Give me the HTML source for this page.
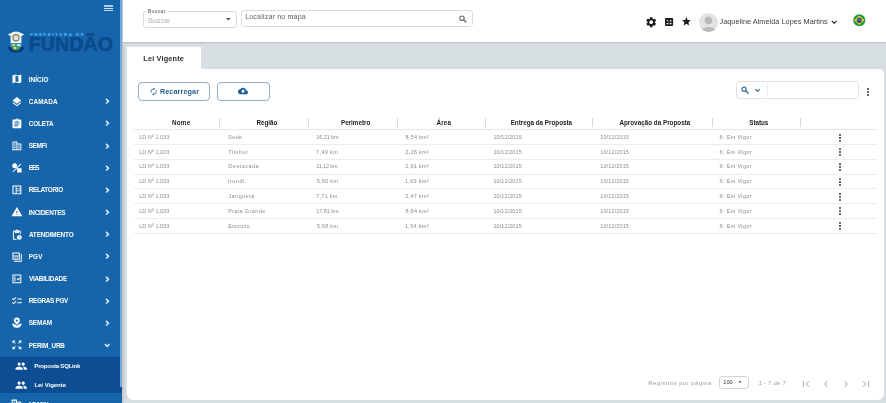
<!DOCTYPE html>
<html><head><meta charset="utf-8"><style>
html,body{margin:0;padding:0}
body{width:886px;height:403px;position:relative;overflow:hidden;background:#d7dee1;font-family:"Liberation Sans",sans-serif}
.t{position:absolute;line-height:1;white-space:nowrap}
.r{position:absolute}
.ic{position:absolute;overflow:visible}
#w{position:absolute;left:0;top:0;width:886px;height:403px;will-change:transform}
</style></head><body><div id="w">
<div class="r" style="left:0.00px;top:0.00px;width:122.30px;height:403.00px;background:#1665aa;box-shadow:1px 0 3px rgba(0,0,0,.18);"></div>
<div class="r" style="left:0.00px;top:356.90px;width:122.30px;height:36.30px;background:#0d4e93;"></div>
<div class="r" style="left:120.00px;top:0.00px;width:2.00px;height:387.30px;background:#74a8dc;"></div>
<div class="r" style="left:104.40px;top:5.00px;width:8.80px;height:2.00px;background:#b4cde6;"></div>
<div class="r" style="left:104.40px;top:8.00px;width:8.80px;height:1.00px;background:#d3e3f1;"></div>
<div class="r" style="left:104.40px;top:10.00px;width:8.80px;height:1.00px;background:#c9dcee;"></div>
<svg class="ic" style="left:4px;top:28px" width="24" height="28" viewBox="0 0 24 28"><path d="M3.8 6.4 L6.6 7.9 L6.6 15.2 L17.4 15.2 L17.4 7.9 L20.3 6.4 L17.6 5.3 Q12 1.6 6.4 5.3Z" fill="#f4f4ee"/><circle cx="12" cy="9.8" r="3.7" fill="#807a5a"/><circle cx="12" cy="9.8" r="2.5" fill="#e4e1d8"/><path d="M6.6 15.2 H17.4 V18.8 H6.6Z" fill="#2f97d8"/><path d="M7.8 16 H11 V18 H7.8Z" fill="#a8d26c"/><path d="M13 16.3 H16.6 V18.3 H13Z" fill="#d9e9f3"/><path d="M3.8 19.2 Q5 24.4 12 24.8 Q19 24.4 20.6 19.2 L17.6 18.5 Q16.2 22.2 12 22.5 Q7.8 22.2 6.4 18.5Z" fill="#0b3a73"/><path d="M7.8 18.6 Q12 17.2 16.4 18.6 Q15.2 22 12 22.3 Q8.8 22 7.8 18.6Z" fill="#4fa64c"/><circle cx="10.7" cy="20.1" r="1.4" fill="#e5d45a"/></svg>
<div class="t" style="left:29.96px;top:32.34px;font-size:42.00px;color:#42adee;font-weight:700;letter-spacing:16.600px;transform:scale(.1);transform-origin:0 0;-webkit-text-stroke:2.5px #42adee;">PREFEITURA DE</div>
<div class="t" style="left:28.70px;top:35.00px;font-size:19.60px;color:#0c4a8c;font-weight:700;letter-spacing:0.106px;-webkit-text-stroke:0.7px #0c4a8c;">FUNDÃO</div>
<div class="t" style="left:28.68px;top:77.00px;font-size:6.40px;color:#ffffff;font-weight:700;letter-spacing:0.072px;">INÍCIO</div>
<svg class="ic" style="left:10.60px;top:73.40px;" width="11.80" height="11.80" viewBox="0 0 24 24"><path d="M20.5 3l-.16.03L15 5.1 9 3 3.36 4.9c-.21.07-.36.25-.36.48V20.5c0 .28.22.5.5.5l.16-.03L9 18.9l6 2.1 5.64-1.9c.21-.07.36-.25.36-.48V3.5c0-.28-.22-.5-.5-.5zM15 19l-6-2.11V5l6 2.11V19z" fill="#ffffff"/></svg>
<div class="t" style="left:28.84px;top:99.00px;font-size:6.40px;color:#ffffff;font-weight:700;letter-spacing:0.070px;">CAMADA</div>
<svg class="ic" style="left:10.60px;top:95.57px;" width="11.80" height="11.80" viewBox="0 0 24 24"><path d="M11.99 18.54l-7.37-5.73L3 14.07l9 7 9-7-1.63-1.27-7.38 5.74zM12 16l7.36-5.73L21 9l-9-7-9 7 1.63 1.27L12 16z" fill="#ffffff"/></svg>
<svg class="ic" style="left:104.6px;top:98.27px" width="5" height="6.4" viewBox="0 0 5 6.4"><path d="M1 0.9 L3.5 3.2 L1 5.5" fill="none" stroke="#e6eef7" stroke-width="1.45"/></svg>
<div class="t" style="left:28.84px;top:121.00px;font-size:6.40px;color:#ffffff;font-weight:700;letter-spacing:-0.212px;">COLETA</div>
<svg class="ic" style="left:10.60px;top:117.74px;" width="11.80" height="11.80" viewBox="0 0 24 24"><path d="M19 3h-4.18C14.4 1.84 13.3 1 12 1c-1.3 0-2.4.84-2.82 2H5c-1.1 0-2 .9-2 2v14c0 1.1.9 2 2 2h14c1.1 0 2-.9 2-2V5c0-1.1-.9-2-2-2zm-7 0c.55 0 1 .45 1 1s-.45 1-1 1-1-.45-1-1 .45-1 1-1zm2 14H7v-2h7v2zm3-4H7v-2h10v2zm0-4H7V7h10v2z" fill="#ffffff"/></svg>
<svg class="ic" style="left:104.6px;top:120.44px" width="5" height="6.4" viewBox="0 0 5 6.4"><path d="M1 0.9 L3.5 3.2 L1 5.5" fill="none" stroke="#e6eef7" stroke-width="1.45"/></svg>
<div class="t" style="left:28.66px;top:143.00px;font-size:6.40px;color:#ffffff;font-weight:700;letter-spacing:-0.314px;">SEMFI</div>
<svg class="ic" style="left:10.60px;top:139.91px;" width="11.80" height="11.80" viewBox="0 0 24 24"><path d="M3 3h10v4h8v14H3zM5 5v14h6V5zm8 4v10h6V9zM6.5 7h3v2h-3zm0 4h3v2h-3zm0 4h3v2h-3zM14.5 11h3v2h-3zm0 4h3v2h-3z" fill="#ffffff"/></svg>
<svg class="ic" style="left:104.6px;top:142.61px" width="5" height="6.4" viewBox="0 0 5 6.4"><path d="M1 0.9 L3.5 3.2 L1 5.5" fill="none" stroke="#e6eef7" stroke-width="1.45"/></svg>
<div class="t" style="left:28.76px;top:165.00px;font-size:6.40px;color:#ffffff;font-weight:700;letter-spacing:-0.960px;">EES</div>
<svg class="ic" style="left:10.60px;top:162.08px;" width="11.80" height="11.80" viewBox="0 0 24 24"><path d="M7.5 2.5a5 5 0 1 0 0.01 0zM12.5 12.5h9v9h-9zM4.4 21L3 19.6 19.6 3 21 4.4z" fill="#ffffff"/></svg>
<svg class="ic" style="left:104.6px;top:164.78px" width="5" height="6.4" viewBox="0 0 5 6.4"><path d="M1 0.9 L3.5 3.2 L1 5.5" fill="none" stroke="#e6eef7" stroke-width="1.45"/></svg>
<div class="t" style="left:28.76px;top:187.00px;font-size:6.40px;color:#ffffff;font-weight:700;letter-spacing:-0.328px;">RELATORIO</div>
<svg class="ic" style="left:10.60px;top:184.25px;" width="11.80" height="11.80" viewBox="0 0 24 24"><path d="M3 3h18v18H3zM5.2 5.2v13.6h4.3V5.2zm6.1 0v4h7.5v-4zm0 5.4v2.8h7.5v-2.8zm0 4.2v4h7.5v-4z" fill="#ffffff"/></svg>
<svg class="ic" style="left:104.6px;top:186.95px" width="5" height="6.4" viewBox="0 0 5 6.4"><path d="M1 0.9 L3.5 3.2 L1 5.5" fill="none" stroke="#e6eef7" stroke-width="1.45"/></svg>
<div class="t" style="left:28.68px;top:210.00px;font-size:6.40px;color:#ffffff;font-weight:700;letter-spacing:-0.195px;">INCIDENTES</div>
<svg class="ic" style="left:10.60px;top:206.42px;" width="11.80" height="11.80" viewBox="0 0 24 24"><path d="M1 21h22L12 2 1 21zm12-3h-2v-2h2v2zm0-4h-2v-4h2v4z" fill="#ffffff"/></svg>
<svg class="ic" style="left:104.6px;top:209.12px" width="5" height="6.4" viewBox="0 0 5 6.4"><path d="M1 0.9 L3.5 3.2 L1 5.5" fill="none" stroke="#e6eef7" stroke-width="1.45"/></svg>
<div class="t" style="left:28.88px;top:232.00px;font-size:6.40px;color:#ffffff;font-weight:700;letter-spacing:-0.144px;">ATENDIMENTO</div>
<svg class="ic" style="left:10.60px;top:228.59px;" width="11.80" height="11.80" viewBox="0 0 24 24"><path d="M17 12c-2.76 0-5 2.24-5 5s2.24 5 5 5 5-2.24 5-5-2.24-5-5-5zm1.65 7.35L16.5 17.2V14h1v2.79l1.85 1.85-.7.71zM18 3h-3.18C14.4 1.84 13.3 1 12 1s-2.4.84-2.82 2H6c-1.1 0-2 .9-2 2v15c0 1.1.9 2 2 2h6.11c-.59-.57-1.07-1.25-1.42-2H6V5h2v3h8V5h2v5.08c.71.1 1.38.31 2 .6V5c0-1.1-.9-2-2-2zm-6 2c-.55 0-1-.45-1-1s.45-1 1-1 1 .45 1 1-.45 1-1 1z" fill="#ffffff"/></svg>
<svg class="ic" style="left:104.6px;top:231.29px" width="5" height="6.4" viewBox="0 0 5 6.4"><path d="M1 0.9 L3.5 3.2 L1 5.5" fill="none" stroke="#e6eef7" stroke-width="1.45"/></svg>
<div class="t" style="left:28.76px;top:254.00px;font-size:6.40px;color:#ffffff;font-weight:700;letter-spacing:0.071px;">PGV</div>
<svg class="ic" style="left:10.60px;top:250.76px;" width="11.80" height="11.80" viewBox="0 0 24 24"><path d="M3 3h15v15H3zM5 5v4h11V5zM5 11v5h11v-5zM7 12.5h2.5v2H7zm4.5 0H14v2h-2.5zM20 6h2v16H6v-2h14z" fill="#ffffff"/></svg>
<svg class="ic" style="left:104.6px;top:253.46px" width="5" height="6.4" viewBox="0 0 5 6.4"><path d="M1 0.9 L3.5 3.2 L1 5.5" fill="none" stroke="#e6eef7" stroke-width="1.45"/></svg>
<div class="t" style="left:28.91px;top:276.00px;font-size:6.40px;color:#ffffff;font-weight:700;letter-spacing:-0.255px;">VIABILIDADE</div>
<svg class="ic" style="left:10.60px;top:272.93px;" width="11.80" height="11.80" viewBox="0 0 24 24"><path d="M3 3h18v18H3zm2 2v14h14V5zm2 2h2v10H7zm4.5 5.2l1.4-1.4 1.6 1.6 3.1-3.1 1.4 1.4-4.5 4.5z" fill="#ffffff"/></svg>
<svg class="ic" style="left:104.6px;top:275.63px" width="5" height="6.4" viewBox="0 0 5 6.4"><path d="M1 0.9 L3.5 3.2 L1 5.5" fill="none" stroke="#e6eef7" stroke-width="1.45"/></svg>
<div class="t" style="left:28.76px;top:298.00px;font-size:6.40px;color:#ffffff;font-weight:700;letter-spacing:-0.341px;">REGRAS PGV</div>
<svg class="ic" style="left:10.60px;top:295.10px;" width="11.80" height="11.80" viewBox="0 0 24 24"><path d="M22 7h-9v2h9V7zm0 8h-9v2h9v-2zM5.54 11L2 7.46l1.41-1.41 2.12 2.12 4.24-4.24 1.41 1.41L5.54 11zm0 8L2 15.46l1.41-1.41 2.12 2.12 4.24-4.24 1.41 1.41L5.54 19z" fill="#ffffff"/></svg>
<svg class="ic" style="left:104.6px;top:297.80px" width="5" height="6.4" viewBox="0 0 5 6.4"><path d="M1 0.9 L3.5 3.2 L1 5.5" fill="none" stroke="#e6eef7" stroke-width="1.45"/></svg>
<div class="t" style="left:28.66px;top:320.00px;font-size:6.40px;color:#ffffff;font-weight:700;letter-spacing:-0.117px;">SEMAM</div>
<svg class="ic" style="left:10.60px;top:317.27px;" width="11.80" height="11.80" viewBox="0 0 24 24"><path d="M12 1.2a6 6 0 0 1 6 6c0 3.2-3 6.2-6 8.6-3-2.4-6-5.4-6-8.6a6 6 0 0 1 6-6zm0 4a2 2 0 1 0 .01 0zM2.5 13c2.8 0 5.5 1.6 9.5 5 4-3.4 6.7-5 9.5-5 0 5-4.3 9-9.5 9s-9.5-4-9.5-9z" fill="#ffffff"/></svg>
<svg class="ic" style="left:104.6px;top:319.97px" width="5" height="6.4" viewBox="0 0 5 6.4"><path d="M1 0.9 L3.5 3.2 L1 5.5" fill="none" stroke="#e6eef7" stroke-width="1.45"/></svg>
<div class="t" style="left:28.76px;top:343.00px;font-size:6.40px;color:#ffffff;font-weight:700;letter-spacing:-0.177px;">PERIM_URB</div>
<svg class="ic" style="left:10.60px;top:339.44px;" width="11.80" height="11.80" viewBox="0 0 24 24"><path d="M15 3l2.3 2.3-2.89 2.87 1.42 1.42L18.7 6.7 21 9V3zM3 9l2.3-2.3 2.87 2.89 1.42-1.42L6.7 5.3 9 3H3zm6 12l-2.3-2.3 2.89-2.87-1.42-1.42L5.3 17.3 3 15v6zm12-6l-2.3 2.3-2.87-2.89-1.42 1.42 2.89 2.87L15 21h6z" fill="#ffffff"/></svg>
<svg class="ic" style="left:103.8px;top:342.74px" width="6.4" height="5" viewBox="0 0 6.4 5"><path d="M0.9 1 L3.2 3.5 L5.5 1" fill="none" stroke="#e6eef7" stroke-width="1.45"/></svg>
<div class="t" style="left:27.68px;top:402.00px;font-size:6.40px;color:#ffffff;font-weight:700;letter-spacing:0.000px;">ADMIN</div>
<svg class="ic" style="left:10.10px;top:398.10px;" width="12.80" height="12.80" viewBox="0 0 24 24"><path d="M3 3h10v4h8v14H3zM5 5v14h6V5zm8 4v10h6V9zM6.5 7h3v2h-3zm0 4h3v2h-3zm0 4h3v2h-3zM14.5 11h3v2h-3zm0 4h3v2h-3z" fill="#ffffff"/></svg>
<div class="t" style="left:34.37px;top:363.00px;font-size:6.00px;color:#ffffff;font-weight:700;letter-spacing:-0.188px;">Proposta SQLink</div>
<div class="t" style="left:34.41px;top:382.00px;font-size:6.00px;color:#ffffff;font-weight:700;letter-spacing:-0.023px;">Lei Vigente</div>
<svg class="ic" style="left:15.20px;top:360.10px;" width="12.40" height="12.40" viewBox="0 0 24 24"><path d="M16 11c1.66 0 2.99-1.34 2.99-3S17.66 5 16 5c-1.66 0-3 1.34-3 3s1.34 3 3 3zm-8 0c1.66 0 2.99-1.34 2.99-3S9.66 5 8 5C6.34 5 5 6.34 5 8s1.34 3 3 3zm0 2c-2.33 0-7 1.17-7 3.5V19h14v-2.5c0-2.330-4.67-3.5-7-3.5zm8 0c-.29 0-.62.02-.97.05 1.16.84 1.97 1.97 1.97 3.45V19h6v-2.5c0-2.33-4.67-3.5-7-3.5z" fill="#ffffff"/></svg>
<svg class="ic" style="left:15.20px;top:378.70px;" width="12.40" height="12.40" viewBox="0 0 24 24"><path d="M16 11c1.66 0 2.99-1.34 2.99-3S17.66 5 16 5c-1.66 0-3 1.34-3 3s1.34 3 3 3zm-8 0c1.66 0 2.99-1.34 2.99-3S9.66 5 8 5C6.34 5 5 6.34 5 8s1.34 3 3 3zm0 2c-2.33 0-7 1.17-7 3.5V19h14v-2.5c0-2.330-4.67-3.5-7-3.5zm8 0c-.29 0-.62.02-.97.05 1.16.84 1.97 1.97 1.97 3.45V19h6v-2.5c0-2.33-4.67-3.5-7-3.5z" fill="#ffffff"/></svg>
<div class="r" style="left:122.30px;top:0.00px;width:763.70px;height:41.80px;background:#ffffff;"></div>
<div class="r" style="left:122.00px;top:0.00px;width:1.00px;height:42.00px;background:#b3c8dc;"></div>
<div class="r" style="left:122.30px;top:41.80px;width:763.70px;height:2.60px;background:linear-gradient(#b9c1c6,#d2dade);"></div>
<div class="r" style="left:143.10px;top:10.60px;width:93.70px;height:17.00px;background:#fff;box-sizing:border-box;border:1px solid #dadada;border-radius:3px;"></div>
<div class="r" style="left:146.80px;top:9.80px;width:21.50px;height:2.00px;background:#fff;"></div>
<div class="t" style="left:147.84px;top:9.00px;font-size:5.20px;color:#555;font-weight:400;letter-spacing:0.295px;">Buscar</div>
<div class="t" style="left:147.89px;top:17.00px;font-size:7.20px;color:#b3b3b3;font-weight:400;letter-spacing:0.048px;">Buscar</div>
<svg class="ic" style="left:225.5px;top:17.9px" width="4.8" height="2.6" viewBox="0 0 4.8 2.6"><path d="M0 0 H4.8 L2.4 2.5Z" fill="#505050"/></svg>
<div class="r" style="left:241.20px;top:10.20px;width:231.60px;height:16.50px;background:#fff;box-sizing:border-box;border:1px solid #dadada;border-radius:3.5px;"></div>
<div class="t" style="left:245.16px;top:13.00px;font-size:7.00px;color:#5c5c5c;font-weight:400;letter-spacing:0.209px;">Localizar no mapa</div>
<svg class="ic" style="left:455px;top:12px" width="14" height="12" viewBox="0 0 14 12"><circle cx="7" cy="6.2" r="2.2" fill="none" stroke="#707070" stroke-width="1.2"/><path d="M8.7 7.9 L11 10.1" stroke="#707070" stroke-width="1.4" stroke-linecap="round"/></svg>
<svg class="ic" style="left:645.30px;top:15.50px;" width="12.40" height="12.40" viewBox="0 0 24 24"><path d="M19.14 12.94c.04-.3.06-.61.06-.94 0-.32-.02-.64-.07-.94l2.03-1.58c.18-.14.23-.41.12-.61l-1.92-3.32c-.12-.22-.37-.29-.59-.22l-2.39.96c-.5-.38-1.03-.7-1.62-.94l-.36-2.54c-.04-.24-.24-.41-.48-.41h-3.840c-.24 0-.43.17-.47.41l-.36 2.54c-.59.24-1.13.57-1.62.94l-2.39-.96c-.22-.08-.47 0-.59.22L2.74 8.87c-.12.21-.08.47.12.61l2.03 1.58c-.05.3-.09.63-.09.94s.02.64.07.94l-2.03 1.58c-.18.14-.23.41-.12.61l1.92 3.32c.12.22.37.29.59.22l2.39-.96c.5.38 1.03.7 1.62.94l.36 2.54c.05.24.24.41.48.41h3.84c.24 0 .44-.17.47-.41l.36-2.54c.59-.24 1.13-.56 1.62-.94l2.39.96c.22.08.47 0 .59-.22l1.92-3.32c.12-.22.07-.47-.12-.61l-2.01-1.58zM12 15.6c-1.98 0-3.6-1.62-3.6-3.6s1.62-3.6 3.6-3.6 3.6 1.62 3.6 3.6-1.62 3.6-3.6 3.6z" fill="#1b1b1b"/></svg>
<svg class="ic" style="left:664.9px;top:17.6px" width="8.1" height="8.1" viewBox="0 0 8.1 8.1"><rect x="0" y="0" width="8.1" height="8.1" rx="1" fill="#1b1b1b"/><rect x="1.7" y="2.3" width="1.6" height="0.9" fill="#fff"/><rect x="4.8" y="1.9" width="1.6" height="0.8" fill="#fff"/><rect x="4.8" y="3.0" width="1.6" height="0.6" fill="#fff"/><rect x="1.6" y="4.9" width="1.8" height="1.4" fill="#fff"/><rect x="4.7" y="4.9" width="1.8" height="1.4" fill="#fff"/></svg>
<svg class="ic" style="left:681.10px;top:16.20px;" width="10.80" height="10.80" viewBox="0 0 24 24"><path d="M12 17.27L18.18 21l-1.64-7.03L22 9.24l-7.19-.61L12 2 9.19 8.63 2 9.24l5.46 4.73L5.82 21z" fill="#1b1b1b"/></svg>
<svg class="ic" style="left:698.9px;top:12.6px" width="19" height="19" viewBox="0 0 20 20"><defs><clipPath id="av"><circle cx="10" cy="10" r="10"/></clipPath></defs><circle cx="10" cy="10" r="10" fill="#e3e3e3"/><g clip-path="url(#av)" fill="#b9b9b9"><circle cx="10" cy="8" r="4"/><path d="M2.6 19.5 C2.6 13.2 17.4 13.2 17.4 19.5 V21 H2.6Z"/></g></svg>
<div class="t" style="left:719.49px;top:18.00px;font-size:7.30px;color:#404040;font-weight:400;letter-spacing:0.039px;">Jaqueline Almeida Lopes Martins</div>
<svg class="ic" style="left:830.8px;top:19.6px" width="6.4" height="4.4" viewBox="0 0 6.4 4.4"><path d="M0.8 0.9 L3.2 3.3 L5.6 0.9" fill="none" stroke="#333" stroke-width="1.3"/></svg>
<svg class="ic" style="left:852.8px;top:13.8px" width="12.6" height="12.6" viewBox="0 0 20 20"><circle cx="10" cy="10" r="9.6" fill="#1f9a3c"/><path d="M10 2.4 L18.2 10 L10 17.6 L1.8 10Z" fill="#f0d020"/><circle cx="10" cy="10" r="4.1" fill="#233f8a"/><path d="M6.3 9.2 Q10 8.2 13.7 10.6" stroke="#e8eef5" stroke-width="0.8" fill="none"/></svg>
<div class="r" style="left:127.10px;top:47.00px;width:74.20px;height:23.00px;background:#ffffff;"></div>
<div class="t" style="left:143.26px;top:55.00px;font-size:7.30px;color:#2e2e2e;font-weight:700;letter-spacing:0.189px;">Lei Vigente</div>
<div class="r" style="left:127.10px;top:69.20px;width:757.10px;height:330.50px;background:#ffffff;border-radius:0 5px 6px 6px;"></div>
<div class="r" style="left:137.70px;top:82.10px;width:72.70px;height:18.80px;background:transparent;box-sizing:border-box;border:1px solid #98adc1;border-radius:4px;"></div>
<svg class="ic" style="left:149.00px;top:87.10px;" width="9.20" height="9.20" viewBox="0 0 24 24"><path d="M12 6v3l4-4-4-4v3c-4.42 0-8 3.58-8 8 0 1.57.46 3.03 1.24 4.26L6.7 14.8c-.45-.83-.7-1.79-.7-2.8 0-3.31 2.69-6 6-6zm6.76 1.74L17.3 9.2c.44.84.7 1.79.7 2.8 0 3.31-2.69 6-6 6v-3l-4 4 4 4v-3c4.42 0 8-3.580 8-8 0-1.57-.46-3.03-1.24-4.26z" fill="#3a6a98"/></svg>
<div class="t" style="left:159.90px;top:88.00px;font-size:7.20px;color:#2c5d90;font-weight:700;letter-spacing:0.131px;">Recarregar</div>
<div class="r" style="left:217.30px;top:82.10px;width:52.30px;height:18.80px;background:transparent;box-sizing:border-box;border:1px solid #98adc1;border-radius:4px;"></div>
<svg class="ic" style="left:237.90px;top:86.40px;" width="10.00" height="10.00" viewBox="0 0 24 24"><path d="M19.35 10.04C18.67 6.59 15.64 4 12 4 9.11 4 6.6 5.64 5.35 8.04 2.34 8.36 0 10.91 0 14c0 3.31 2.690 6 6 6h13c2.76 0 5-2.24 5-5 0-2.64-2.05-4.78-4.65-4.96zM14 13v4h-4v-4H7l5-5 5 5h-3z" fill="#1b5a97"/></svg>
<div class="r" style="left:736.40px;top:80.90px;width:123.10px;height:18.60px;background:transparent;box-sizing:border-box;border:1px solid #e0e0e0;border-radius:2.5px;"></div>
<div class="r" style="left:767.30px;top:81.40px;width:1.00px;height:17.80px;background:#ececec;"></div>
<svg class="ic" style="left:735px;top:80px" width="30" height="20" viewBox="0 0 30 20"><circle cx="9.1" cy="9.2" r="2.05" fill="none" stroke="#44739f" stroke-width="1.25"/><path d="M10.7 10.8 L13.2 13.3" stroke="#44739f" stroke-width="1.4" stroke-linecap="round"/><path d="M20.3 9.2 L22.5 11.3 L24.7 9.2" fill="none" stroke="#4a77a2" stroke-width="1.25"/></svg>
<div class="r" style="left:867.00px;top:88.00px;width:2.00px;height:2.00px;background:#666;"></div>
<div class="r" style="left:867.00px;top:91.00px;width:2.00px;height:2.00px;background:#666;"></div>
<div class="r" style="left:867.00px;top:94.00px;width:2.00px;height:2.00px;background:#666;"></div>
<div class="t" style="left:171.95px;top:120.00px;font-size:6.30px;color:#1e1e1e;font-weight:700;letter-spacing:0.235px;">Nome</div>
<div class="t" style="left:256.48px;top:120.00px;font-size:6.30px;color:#1e1e1e;font-weight:700;letter-spacing:-0.021px;">Região</div>
<div class="t" style="left:340.95px;top:120.00px;font-size:6.30px;color:#1e1e1e;font-weight:700;letter-spacing:-0.008px;">Perimetro</div>
<div class="t" style="left:436.39px;top:120.00px;font-size:6.30px;color:#1e1e1e;font-weight:700;letter-spacing:0.219px;">Área</div>
<div class="t" style="left:510.69px;top:120.00px;font-size:6.30px;color:#1e1e1e;font-weight:700;letter-spacing:-0.013px;">Entrega da Proposta</div>
<div class="t" style="left:619.39px;top:120.00px;font-size:6.30px;color:#1e1e1e;font-weight:700;letter-spacing:0.012px;">Aprovação da Proposta</div>
<div class="t" style="left:749.21px;top:120.00px;font-size:6.30px;color:#1e1e1e;font-weight:700;letter-spacing:-0.018px;">Status</div>
<div class="r" style="left:219.20px;top:117.80px;width:0.80px;height:9.00px;background:#d8d8d8;"></div>
<div class="r" style="left:308.40px;top:117.80px;width:0.80px;height:9.00px;background:#d8d8d8;"></div>
<div class="r" style="left:397.10px;top:117.80px;width:0.80px;height:9.00px;background:#d8d8d8;"></div>
<div class="r" style="left:485.40px;top:117.80px;width:0.80px;height:9.00px;background:#d8d8d8;"></div>
<div class="r" style="left:592.40px;top:117.80px;width:0.80px;height:9.00px;background:#d8d8d8;"></div>
<div class="r" style="left:711.90px;top:117.80px;width:0.80px;height:9.00px;background:#d8d8d8;"></div>
<div class="r" style="left:799.90px;top:117.80px;width:0.80px;height:9.00px;background:#d8d8d8;"></div>
<div class="r" style="left:134.00px;top:129.30px;width:743.00px;height:1.00px;background:#e6e6e6;"></div>
<div class="t" style="left:139.25px;top:135.00px;font-size:5.50px;color:#8c8c8c;font-weight:400;letter-spacing:0.015px;">LD Nº 1.033</div>
<div class="t" style="left:228.08px;top:135.00px;font-size:5.50px;color:#8c8c8c;font-weight:400;letter-spacing:0.411px;">Sede</div>
<div class="t" style="left:316.27px;top:135.00px;font-size:5.50px;color:#8c8c8c;font-weight:400;letter-spacing:-0.047px;">16,21 km</div>
<div class="t" style="left:405.46px;top:135.00px;font-size:5.50px;color:#8c8c8c;font-weight:400;letter-spacing:0.263px;">8,54 km²</div>
<div class="t" style="left:493.49px;top:135.00px;font-size:5.50px;color:#8c8c8c;font-weight:400;letter-spacing:0.076px;">10/12/2015</div>
<div class="t" style="left:600.26px;top:135.00px;font-size:5.50px;color:#8c8c8c;font-weight:400;letter-spacing:0.125px;">10/12/2015</div>
<div class="t" style="left:719.50px;top:135.00px;font-size:5.50px;color:#8c8c8c;font-weight:400;letter-spacing:0.338px;">6: Em Vigor</div>
<div class="r" style="left:839.00px;top:134.00px;width:2.00px;height:2.00px;background:#6a6a6a;"></div>
<div class="r" style="left:839.00px;top:137.00px;width:2.00px;height:2.00px;background:#6a6a6a;"></div>
<div class="r" style="left:839.00px;top:140.00px;width:2.00px;height:2.00px;background:#6a6a6a;"></div>
<div class="r" style="left:134.00px;top:144.07px;width:743.00px;height:1.00px;background:#ececec;"></div>
<div class="t" style="left:139.25px;top:150.00px;font-size:5.50px;color:#8c8c8c;font-weight:400;letter-spacing:0.015px;">LD Nº 1.033</div>
<div class="t" style="left:228.30px;top:150.00px;font-size:5.50px;color:#8c8c8c;font-weight:400;letter-spacing:0.552px;">Timbuí</div>
<div class="t" style="left:316.11px;top:150.00px;font-size:5.50px;color:#8c8c8c;font-weight:400;letter-spacing:0.355px;">7,49 km</div>
<div class="t" style="left:405.25px;top:150.00px;font-size:5.50px;color:#8c8c8c;font-weight:400;letter-spacing:0.290px;">2,28 km²</div>
<div class="t" style="left:493.49px;top:150.00px;font-size:5.50px;color:#8c8c8c;font-weight:400;letter-spacing:0.076px;">10/12/2015</div>
<div class="t" style="left:600.26px;top:150.00px;font-size:5.50px;color:#8c8c8c;font-weight:400;letter-spacing:0.125px;">10/12/2015</div>
<div class="t" style="left:719.50px;top:150.00px;font-size:5.50px;color:#8c8c8c;font-weight:400;letter-spacing:0.338px;">6: Em Vigor</div>
<div class="r" style="left:839.00px;top:148.00px;width:2.00px;height:2.00px;background:#6a6a6a;"></div>
<div class="r" style="left:839.00px;top:151.00px;width:2.00px;height:2.00px;background:#6a6a6a;"></div>
<div class="r" style="left:839.00px;top:154.00px;width:2.00px;height:2.00px;background:#6a6a6a;"></div>
<div class="r" style="left:134.00px;top:158.84px;width:743.00px;height:1.00px;background:#ececec;"></div>
<div class="t" style="left:139.25px;top:164.00px;font-size:5.50px;color:#8c8c8c;font-weight:400;letter-spacing:0.015px;">LD Nº 1.033</div>
<div class="t" style="left:228.13px;top:164.00px;font-size:5.50px;color:#8c8c8c;font-weight:400;letter-spacing:0.528px;">Destacada</div>
<div class="t" style="left:316.27px;top:164.00px;font-size:5.50px;color:#8c8c8c;font-weight:400;letter-spacing:-0.145px;">11,12 km</div>
<div class="t" style="left:405.25px;top:164.00px;font-size:5.50px;color:#8c8c8c;font-weight:400;letter-spacing:0.290px;">2,91 km²</div>
<div class="t" style="left:493.49px;top:164.00px;font-size:5.50px;color:#8c8c8c;font-weight:400;letter-spacing:0.076px;">10/12/2015</div>
<div class="t" style="left:600.26px;top:164.00px;font-size:5.50px;color:#8c8c8c;font-weight:400;letter-spacing:0.125px;">10/12/2015</div>
<div class="t" style="left:719.50px;top:164.00px;font-size:5.50px;color:#8c8c8c;font-weight:400;letter-spacing:0.338px;">6: Em Vigor</div>
<div class="r" style="left:839.00px;top:163.00px;width:2.00px;height:2.00px;background:#6a6a6a;"></div>
<div class="r" style="left:839.00px;top:166.00px;width:2.00px;height:2.00px;background:#6a6a6a;"></div>
<div class="r" style="left:839.00px;top:169.00px;width:2.00px;height:2.00px;background:#6a6a6a;"></div>
<div class="r" style="left:134.00px;top:173.61px;width:743.00px;height:1.00px;background:#ececec;"></div>
<div class="t" style="left:139.25px;top:179.00px;font-size:5.50px;color:#8c8c8c;font-weight:400;letter-spacing:0.015px;">LD Nº 1.033</div>
<div class="t" style="left:228.09px;top:179.00px;font-size:5.50px;color:#8c8c8c;font-weight:400;letter-spacing:0.456px;">Irundi</div>
<div class="t" style="left:316.64px;top:179.00px;font-size:5.50px;color:#8c8c8c;font-weight:400;letter-spacing:0.299px;">5,80 km</div>
<div class="t" style="left:404.95px;top:179.00px;font-size:5.50px;color:#8c8c8c;font-weight:400;letter-spacing:0.316px;">1,69 km²</div>
<div class="t" style="left:493.49px;top:179.00px;font-size:5.50px;color:#8c8c8c;font-weight:400;letter-spacing:0.076px;">10/12/2015</div>
<div class="t" style="left:600.26px;top:179.00px;font-size:5.50px;color:#8c8c8c;font-weight:400;letter-spacing:0.125px;">10/12/2015</div>
<div class="t" style="left:719.50px;top:179.00px;font-size:5.50px;color:#8c8c8c;font-weight:400;letter-spacing:0.338px;">6: Em Vigor</div>
<div class="r" style="left:839.00px;top:178.00px;width:2.00px;height:2.00px;background:#6a6a6a;"></div>
<div class="r" style="left:839.00px;top:181.00px;width:2.00px;height:2.00px;background:#6a6a6a;"></div>
<div class="r" style="left:839.00px;top:184.00px;width:2.00px;height:2.00px;background:#6a6a6a;"></div>
<div class="r" style="left:134.00px;top:188.38px;width:743.00px;height:1.00px;background:#ececec;"></div>
<div class="t" style="left:139.25px;top:194.00px;font-size:5.50px;color:#8c8c8c;font-weight:400;letter-spacing:0.015px;">LD Nº 1.033</div>
<div class="t" style="left:228.39px;top:194.00px;font-size:5.50px;color:#8c8c8c;font-weight:400;letter-spacing:0.482px;">Janguetá</div>
<div class="t" style="left:316.11px;top:194.00px;font-size:5.50px;color:#8c8c8c;font-weight:400;letter-spacing:0.290px;">7,71 km</div>
<div class="t" style="left:405.25px;top:194.00px;font-size:5.50px;color:#8c8c8c;font-weight:400;letter-spacing:0.290px;">2,47 km²</div>
<div class="t" style="left:493.49px;top:194.00px;font-size:5.50px;color:#8c8c8c;font-weight:400;letter-spacing:0.076px;">10/12/2015</div>
<div class="t" style="left:600.26px;top:194.00px;font-size:5.50px;color:#8c8c8c;font-weight:400;letter-spacing:0.125px;">10/12/2015</div>
<div class="t" style="left:719.50px;top:194.00px;font-size:5.50px;color:#8c8c8c;font-weight:400;letter-spacing:0.338px;">6: Em Vigor</div>
<div class="r" style="left:839.00px;top:193.00px;width:2.00px;height:2.00px;background:#6a6a6a;"></div>
<div class="r" style="left:839.00px;top:196.00px;width:2.00px;height:2.00px;background:#6a6a6a;"></div>
<div class="r" style="left:839.00px;top:199.00px;width:2.00px;height:2.00px;background:#6a6a6a;"></div>
<div class="r" style="left:134.00px;top:203.15px;width:743.00px;height:1.00px;background:#ececec;"></div>
<div class="t" style="left:139.25px;top:209.00px;font-size:5.50px;color:#8c8c8c;font-weight:400;letter-spacing:0.015px;">LD Nº 1.033</div>
<div class="t" style="left:228.13px;top:209.00px;font-size:5.50px;color:#8c8c8c;font-weight:400;letter-spacing:0.397px;">Praia Grande</div>
<div class="t" style="left:316.27px;top:209.00px;font-size:5.50px;color:#8c8c8c;font-weight:400;letter-spacing:-0.047px;">17,81 km</div>
<div class="t" style="left:405.46px;top:209.00px;font-size:5.50px;color:#8c8c8c;font-weight:400;letter-spacing:0.263px;">8,64 km²</div>
<div class="t" style="left:493.49px;top:209.00px;font-size:5.50px;color:#8c8c8c;font-weight:400;letter-spacing:0.076px;">10/12/2015</div>
<div class="t" style="left:600.26px;top:209.00px;font-size:5.50px;color:#8c8c8c;font-weight:400;letter-spacing:0.125px;">10/12/2015</div>
<div class="t" style="left:719.50px;top:209.00px;font-size:5.50px;color:#8c8c8c;font-weight:400;letter-spacing:0.338px;">6: Em Vigor</div>
<div class="r" style="left:839.00px;top:207.00px;width:2.00px;height:2.00px;background:#6a6a6a;"></div>
<div class="r" style="left:839.00px;top:210.00px;width:2.00px;height:2.00px;background:#6a6a6a;"></div>
<div class="r" style="left:839.00px;top:213.00px;width:2.00px;height:2.00px;background:#6a6a6a;"></div>
<div class="r" style="left:134.00px;top:217.92px;width:743.00px;height:1.00px;background:#ececec;"></div>
<div class="t" style="left:139.25px;top:224.00px;font-size:5.50px;color:#8c8c8c;font-weight:400;letter-spacing:0.015px;">LD Nº 1.033</div>
<div class="t" style="left:228.13px;top:224.00px;font-size:5.50px;color:#8c8c8c;font-weight:400;letter-spacing:0.221px;">Encruzo</div>
<div class="t" style="left:316.64px;top:224.00px;font-size:5.50px;color:#8c8c8c;font-weight:400;letter-spacing:0.299px;">5,98 km</div>
<div class="t" style="left:404.95px;top:224.00px;font-size:5.50px;color:#8c8c8c;font-weight:400;letter-spacing:0.316px;">1,54 km²</div>
<div class="t" style="left:493.49px;top:224.00px;font-size:5.50px;color:#8c8c8c;font-weight:400;letter-spacing:0.076px;">10/12/2015</div>
<div class="t" style="left:600.26px;top:224.00px;font-size:5.50px;color:#8c8c8c;font-weight:400;letter-spacing:0.125px;">10/12/2015</div>
<div class="t" style="left:719.50px;top:224.00px;font-size:5.50px;color:#8c8c8c;font-weight:400;letter-spacing:0.338px;">6: Em Vigor</div>
<div class="r" style="left:839.00px;top:222.00px;width:2.00px;height:2.00px;background:#6a6a6a;"></div>
<div class="r" style="left:839.00px;top:225.00px;width:2.00px;height:2.00px;background:#6a6a6a;"></div>
<div class="r" style="left:839.00px;top:228.00px;width:2.00px;height:2.00px;background:#6a6a6a;"></div>
<div class="r" style="left:134.00px;top:232.69px;width:743.00px;height:1.00px;background:#ececec;"></div>
<div class="t" style="left:648.23px;top:381.00px;font-size:5.90px;color:#9b9b9b;font-weight:400;letter-spacing:0.457px;">Registros por página</div>
<div class="r" style="left:719.10px;top:375.50px;width:29.60px;height:13.90px;background:transparent;box-sizing:border-box;border:0.8px solid #d4d4d4;border-radius:3px;"></div>
<div class="t" style="left:723.34px;top:380.00px;font-size:5.60px;color:#333;font-weight:400;letter-spacing:0.030px;">100</div>
<svg class="ic" style="left:735.50px;top:378.20px;" width="8.00" height="8.00" viewBox="0 0 24 24"><path d="M7 10l5 5 5-5z" fill="#444"/></svg>
<div class="t" style="left:758.56px;top:381.00px;font-size:5.90px;color:#9b9b9b;font-weight:400;letter-spacing:0.265px;">1 - 7 de 7</div>
<svg class="ic" style="left:800.00px;top:377.80px;" width="12.00" height="12.00" viewBox="0 0 24 24"><path d="M18.41 16.59L13.82 12l4.59-4.59L17 6l-6 6 6 6zM6 6h2v12H6z" fill="#b9b9b9"/></svg>
<svg class="ic" style="left:820.00px;top:377.80px;" width="12.00" height="12.00" viewBox="0 0 24 24"><path d="M15.41 7.41L14 6l-6 6 6 6 1.41-1.41L10.83 12z" fill="#b9b9b9"/></svg>
<svg class="ic" style="left:840.00px;top:377.80px;" width="12.00" height="12.00" viewBox="0 0 24 24"><path d="M10 6L8.59 7.41 13.17 12l-4.58 4.59L10 18l6-6z" fill="#b9b9b9"/></svg>
<svg class="ic" style="left:860.00px;top:377.80px;" width="12.00" height="12.00" viewBox="0 0 24 24"><path d="M5.59 7.41L10.18 12l-4.59 4.59L7 18l6-6-6-6zM16 6h2v12h-2z" fill="#b9b9b9"/></svg>
</div></body></html>
